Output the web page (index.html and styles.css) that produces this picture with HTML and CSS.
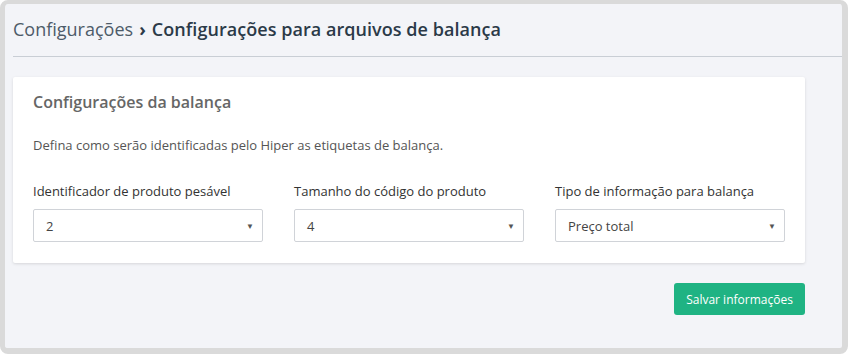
FILE: index.html
```html
<!DOCTYPE html>
<html lang="pt-BR">
  <head>
    <meta charset="UTF-8" />
    <title>Configurações para arquivos de balança</title>
    <link rel="stylesheet" href="styles.css">
  </head>
  <body>
    <div class="frame">
      <div class="page-header">
        <span class="crumb">Configurações</span>
        <span class="sep">›</span>
        <span class="current">Configurações para arquivos de balança</span>
      </div>

      <div class="card">
        <h2 class="card-title">Configurações da balança</h2>
        <p class="card-text">Defina como serão identificadas pelo Hiper as etiquetas de balança.</p>

        <div class="fields">
          <div class="field">
            <label>Identificador de produto pesável</label>
            <div class="select"><span>2</span><span class="arrow">▼</span></div>
          </div>
          <div class="field">
            <label>Tamanho do código do produto</label>
            <div class="select"><span>4</span><span class="arrow">▼</span></div>
          </div>
          <div class="field">
            <label>Tipo de informação para balança</label>
            <div class="select"><span>Preço total</span><span class="arrow">▼</span></div>
          </div>
        </div>
      </div>

      <div class="actions">
        <button class="btn-save">Salvar informações</button>
      </div>
    </div>
  </body>
</html>
```

FILE: styles.css
```css
* {
  margin: 0;
  padding: 0;
  box-sizing: border-box;
}

body {
  font-family: "Open Sans", "Noto Sans", sans-serif;
  width: 848px;
  height: 354px;
  background: #ffffff;
  overflow: hidden;
}

.frame {
  width: 848px;
  height: 354px;
  background: #f3f4f8;
  border-style: solid;
  border-color: #dadada;
  border-width: 4px 6px 6px 5px;
  border-radius: 8px;
}

/* Breadcrumb header */
.page-header {
  margin-left: 8px;
  height: 53px;
  border-bottom: 1px solid #c9ced5;
  display: flex;
  align-items: center;
  gap: 6px;
  padding-bottom: 3px;
  font-size: 18px;
}

.crumb {
  color: #4d5b69;
}

.sep {
  color: #2b3a48;
  font-weight: 700;
}

.current {
  color: #2b3a48;
  font-weight: 600;
  letter-spacing: 0.05px;
}

/* Card */
.card {
  margin: 20px 0 0 8px;
  width: 792px;
  background: #ffffff;
  border-radius: 2px;
  box-shadow: 0 1px 3px rgba(0, 0, 0, 0.12);
  padding: 14px 20px 21px;
}

.card-title {
  font-size: 16px;
  font-weight: 600;
  color: #666666;
  line-height: 22px;
}

.card-text {
  margin-top: 22px;
  font-size: 13px;
  color: #555555;
  line-height: 20px;
}

.fields {
  margin-top: 27px;
  display: grid;
  grid-template-columns: repeat(3, 230px);
  column-gap: 31px;
}

.field label {
  display: block;
  font-size: 13px;
  color: #333333;
  line-height: 18px;
  margin-bottom: 9px;
}

.select {
  height: 33px;
  border: 1px solid #d0d3d8;
  border-radius: 2px;
  display: flex;
  align-items: center;
  justify-content: space-between;
  padding: 0 8px 0 12px;
  font-size: 13px;
  color: #444444;
}

.arrow {
  font-size: 8px;
  color: #555555;
}

/* Footer actions */
.actions {
  width: 800px;
  display: flex;
  justify-content: flex-end;
  margin-top: 20px;
}

.btn-save {
  width: 131px;
  height: 32px;
  border: none;
  border-radius: 3px;
  background: #1fb383;
  color: #ffffff;
  font-family: "Open Sans", "Noto Sans", sans-serif;
  font-size: 12px;
  cursor: pointer;
}
```
